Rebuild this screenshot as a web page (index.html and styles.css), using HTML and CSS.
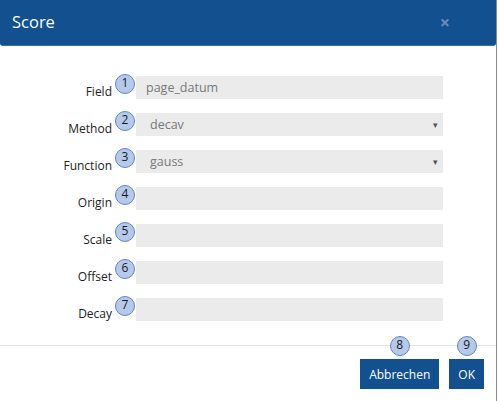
FILE: index.html
```html
<!DOCTYPE html>
<html>
<head>
<meta charset="utf-8">
<link rel="stylesheet" href="styles.css">
</head>
<body>
<div class="modal">
  <div class="header">
    <span class="title">Score</span>
    <span class="close">&times;</span>
  </div>
  <div class="body">
    <div class="row"><span class="label">Field</span><span class="badge">1</span><div class="input">page_datum</div></div>
    <div class="row"><span class="label">Method</span><span class="badge">2</span><div class="input select">decav<span class="caret">&#9662;</span></div></div>
    <div class="row"><span class="label">Function</span><span class="badge">3</span><div class="input select">gauss<span class="caret">&#9662;</span></div></div>
    <div class="row"><span class="label">Origin</span><span class="badge">4</span><div class="input"></div></div>
    <div class="row"><span class="label">Scale</span><span class="badge">5</span><div class="input"></div></div>
    <div class="row"><span class="label">Offset</span><span class="badge">6</span><div class="input"></div></div>
    <div class="row"><span class="label">Decay</span><span class="badge">7</span><div class="input"></div></div>
  </div>
  <div class="footer">
    <button class="btn">Abbrechen<span class="badge over">8</span></button>
    <button class="btn">OK<span class="badge over">9</span></button>
  </div>
</div>
</body>
</html>
```
FILE: styles.css
```css
html, body {
  margin: 0;
  padding: 0;
  background: #fff;
  font-family: "Open Sans", "Liberation Sans", sans-serif;
}
.modal {
  width: 497px;
  height: 401px;
  border-right: 1px solid #8c8c8c;
  box-sizing: border-box;
  display: flex;
  flex-direction: column;
}
.header {
  height: 46px;
  box-sizing: border-box;
  background: #12508f;
  border-bottom: 1px solid #3a6ea5;
  border-radius: 0 0 3px 3px;
  display: flex;
  align-items: center;
  justify-content: space-between;
  padding: 0 46px 2px 12px;
}
.title {
  color: #fff;
  font-size: 16.5px;
  line-height: 24px;
}
.close {
  color: #6b8cb4;
  font-size: 18px;
  font-weight: bold;
  line-height: 18px;
}
.body {
  padding: 30px 0 0 0;
  display: flex;
  flex-direction: column;
  gap: 13px;
  height: 300px;
  box-sizing: border-box;
  border-bottom: 1px solid #e5e5e5;
}
.row {
  display: flex;
  align-items: flex-start;
  height: 24px;
}
.label {
  width: 112px;
  text-align: right;
  font-size: 12px;
  color: #222;
  line-height: 16px;
  padding-top: 8px;
  box-sizing: border-box;
}
.badge {
  width: 20px;
  height: 20px;
  box-sizing: border-box;
  border-radius: 50%;
  background: #b6c9ea;
  border: 1px solid #5f86c6;
  color: #1a1a1a;
  font-size: 12px;
  line-height: 15px;
  text-align: center;
  margin: -2px 1px 0 3px;
  flex: none;
}
.input {
  width: 307px;
  height: 23px;
  background: #ebebeb;
  color: #777;
  font-size: 12.5px;
  line-height: 23px;
  padding-left: 10px;
  box-sizing: border-box;
  position: relative;
}
.select {
  padding-left: 14px;
}
.caret {
  position: absolute;
  right: 5px;
  top: 0;
  font-size: 9px;
  color: #555;
}
.footer {
  display: flex;
  justify-content: flex-end;
  gap: 10px;
  padding: 13px 12px 0 0;
}
.btn {
  position: relative;
  background: #12508f;
  color: #fff;
  border: none;
  font-family: "Open Sans", "Liberation Sans", sans-serif;
  font-size: 12px;
  height: 30px;
  padding: 0 9px;
  margin: 0;
}
.btn .over {
  position: absolute;
  left: 50%;
  top: -23px;
  margin: 0 0 0 -10px;
}
```
